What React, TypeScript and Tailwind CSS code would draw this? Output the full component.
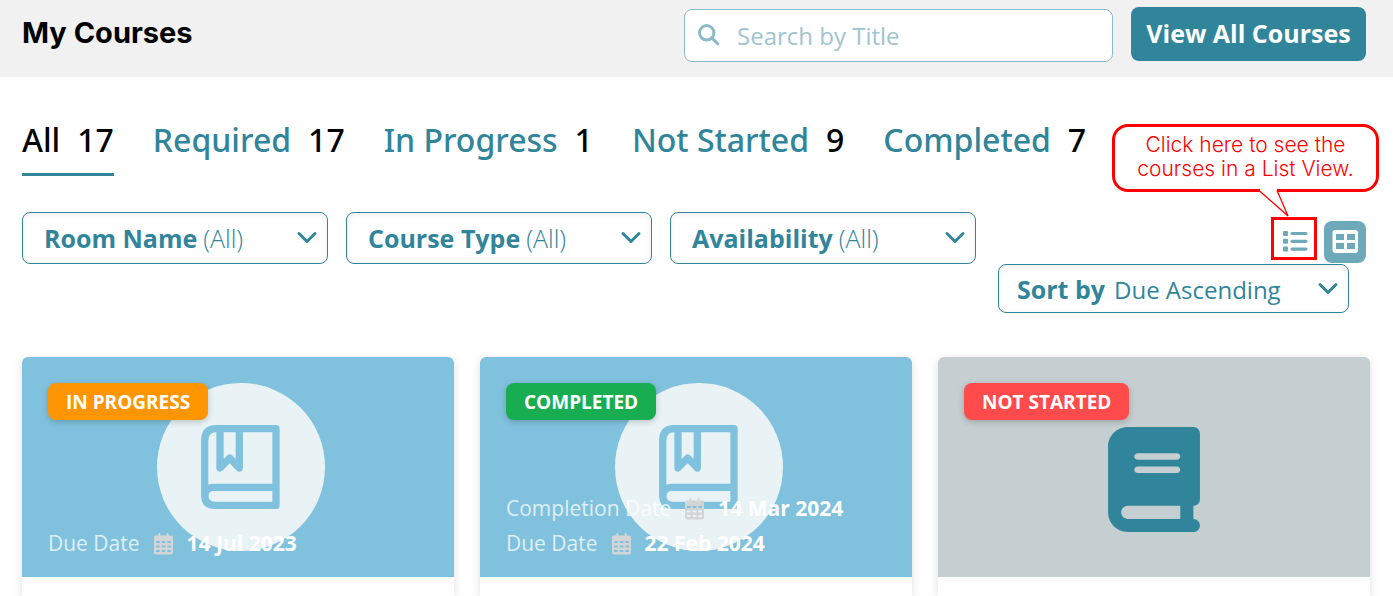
import React, { useState } from "react";
import { FaBook } from "react-icons/fa6";

const tabs = [
    { label: "All", count: 17 },
    { label: "Required", count: 17 },
    { label: "In Progress", count: 1 },
    { label: "Not Started", count: 9 },
    { label: "Completed", count: 7 },
];

const filters = [
    { id: "room", label: "Room Name" },
    { id: "type", label: "Course Type" },
    { id: "availability", label: "Availability" },
];

const courses = [
    { status: "IN PROGRESS", color: "bg-[#ff9500]", started: true, dates: [{ label: "Due Date", value: "14 Jul 2023" }] },
    {
        status: "COMPLETED",
        color: "bg-[#19ad52]",
        started: true,
        dates: [
            { label: "Completion Date", value: "14 Mar 2024" },
            { label: "Due Date", value: "22 Feb 2024" },
        ],
    },
    { status: "NOT STARTED", color: "bg-[#ff4b4b]", started: false, dates: [] },
];

const Chevron = () => (
    <svg className="pointer-events-none absolute right-2 top-1/2 h-6 w-6 -translate-y-1/2" viewBox="0 0 24 24" fill="none" stroke="#31859a" strokeWidth="3" strokeLinecap="round" strokeLinejoin="round">
        <path d="M4 7.5l8 8 8-8" />
    </svg>
);

const SearchIcon = () => (
    <svg className="h-6 w-6 shrink-0" viewBox="0 0 24 24" fill="none" stroke="#8bbac8" strokeWidth="3">
        <circle cx="9.7" cy="8.8" r="7.2" />
        <path d="M15 14.1l5.7 5.7" strokeLinecap="round" />
    </svg>
);

const ListIcon = () => (
    <svg width="26" height="22" viewBox="0 0 26 22" fill="#6da9b8">
        {[0.5, 8.3, 16.1].map((y) => (
            <g key={y}>
                <rect x="1" y={y - 0.5} width="5" height="5" rx="1" />
                <rect x="8.5" y={y + 0.4} width="17" height="3.2" rx="1.6" />
            </g>
        ))}
    </svg>
);

const GridIcon = () => (
    <svg width="26" height="24" viewBox="0 0 26 24">
        <rect x="0.5" y="0" width="25.5" height="23" rx="3" fill="#fff" />
        <g fill="#6da9b8">
            <rect x="4" y="4" width="8" height="6" />
            <rect x="15" y="4" width="8" height="6" />
            <rect x="4" y="13" width="8" height="6" />
            <rect x="15" y="13" width="8" height="6" />
        </g>
    </svg>
);

const CalendarIcon = () => (
    <svg className="shrink-0" width="19" height="22" viewBox="0 0 19 22" fill="#d3d5d6">
        <rect x="4.3" y="0" width="2" height="4" rx="1" />
        <rect x="12.7" y="0" width="2" height="4" rx="1" />
        <path
            fillRule="evenodd"
            d="M2 2.5H17a2 2 0 0 1 2 2V19.500a2 2 0 0 1-2 2H2a2 2 0 0 1-2-2V4.500a2 2 0 0 1 2-2zM2 8v2h3.700v-2zM7.700 8v2h3.600v-2zM13.300 8v2H17v-2zM2 12.500v2h3.700v-2zM7.700 12.500v2h3.600v-2zM13.300 12.500v2H17v-2zM2 17v2h3.700v-2zM7.700 17v2h3.600v-2zM13.300 17v2H17v-2z"
        />
    </svg>
);

const BookmarkBook = () => (
    <svg width="168" height="168" viewBox="0 0 168 168" fill="none" stroke="#80c2dd" strokeWidth="7.3" strokeLinejoin="round">
        <circle cx="84" cy="84" r="84" fill="#e9f3f6" stroke="none" />
        <path d="M119 45.7H59Q47.7 45.7 47.7 58V112Q47.7 122.4 58 122.4H119Z" />
        <path d="M119 104.3H57Q47.7 104.3 47.7 113.5" />
        <path d="M63 46V85L72.7 75L82.3 85V46" />
    </svg>
);

const App = () => {
    const [active, setActive] = useState("All");
    const [search, setSearch] = useState("");

    return (
        <div className="flex min-h-screen flex-col bg-white font-['Open_Sans',sans-serif] text-[#31859a]">
            <header className="flex h-[77px] items-start justify-between bg-[#f1f1f1] pl-[22px] pr-[27px] pt-[7px]">
                <h1 className="font-['Inter',sans-serif] text-[29px] leading-[52px] font-bold text-black">My Courses</h1>
                <div className="flex gap-[18px]">
                    <label className="mt-[2px] flex h-[53px] w-[429px] items-center gap-4 rounded-lg border border-[#8bbac8] bg-white px-3">
                        <SearchIcon />
                        <input
                            type="text"
                            aria-label="Search by Title"
                            placeholder="Search by Title"
                            value={search}
                            onChange={(e) => setSearch(e.target.value)}
                            className="min-w-0 flex-1 text-2xl outline-none placeholder:text-[#9fc4d1]"
                        />
                    </label>
                    <button className="h-[54px] w-[235px] rounded-lg bg-[#31859a] text-[25px] font-bold whitespace-nowrap text-white">View All Courses</button>
                </div>
            </header>

            <nav className="flex gap-[39px] px-[22px] pt-[39px] font-['Noto_Sans',sans-serif]">
                {tabs.map((tab) => (
                    <button
                        key={tab.label}
                        onClick={() => setActive(tab.label)}
                        className={`flex gap-[17px] border-b-3 pb-[9px] text-[32px] leading-[48px] font-medium ${active === tab.label ? "border-[#31859a] text-black" : "border-transparent"}`}
                    >
                        <span>{tab.label}</span>
                        <span className="text-black">{tab.count}</span>
                    </button>
                ))}
            </nav>

            <section className="flex items-start justify-between pl-[22px] pr-[27px] pt-9">
                <div className="flex gap-[18px]">
                    {filters.map((f) => (
                        <div key={f.id} className="relative flex h-[52px] w-[306px] items-center gap-[6px] rounded-lg border border-[#31859a] pt-0.5 pl-[21px] text-[25px] shadow-[inset_0_2px_6px_rgba(0,0,0,0.07)]">
                            <label htmlFor={f.id} className="font-bold whitespace-nowrap">{f.label}</label>
                            <select id={f.id} className="h-full min-w-0 flex-1 appearance-none bg-transparent font-light outline-none">
                                <option>(All)</option>
                            </select>
                            <Chevron />
                        </div>
                    ))}
                </div>
                <div className="-ml-4 flex flex-col items-end pt-[9px]">
                    <div className="relative flex gap-2">
                        <button aria-label="List view" className="flex h-[42px] w-[42px] items-center justify-center">
                            <ListIcon />
                        </button>
                        <button aria-label="Grid view" className="flex h-[42px] w-[42px] items-center justify-center rounded-lg bg-[#6da9b8]">
                            <GridIcon />
                        </button>
                        <div className="absolute -top-1 right-[49px] h-[43px] w-[46px] border-3 border-[#ff0000]"></div>
                        <div className="absolute -top-[97px] -right-[13px] h-[68px] w-[267px] rounded-2xl border-3 border-[#ff0000] bg-white pt-1.5 text-center font-['Inter',sans-serif] text-[21px] leading-6 font-light text-[#ff0000]">
                            Click here to see the
                            <br />
                            courses in a List View.
                        </div>
                        <svg className="absolute -top-8 right-[72px]" width="40" height="30" viewBox="0 0 40 30">
                            <path d="M6 0H23V3H6z" fill="#fff" />
                            <path d="M5 1.500L34 27L23 1.500" fill="#fff" stroke="#ff0000" strokeWidth="1.300" />
                        </svg>
                    </div>
                    <div className="relative mt-px mr-[17px] flex h-[49px] w-[351px] items-center gap-[9px] rounded-lg border border-[#31859a] pt-0.5 pl-[18px] text-[25px] shadow-[inset_0_2px_6px_rgba(0,0,0,0.07)]">
                        <label htmlFor="sort" className="font-bold whitespace-nowrap">Sort by</label>
                        <select id="sort" className="h-full min-w-0 flex-1 appearance-none bg-transparent text-2xl outline-none">
                            <option>Due Ascending</option>
                        </select>
                        <Chevron />
                    </div>
                </div>
            </section>

            <main className="grid flex-1 grid-cols-3 gap-[26px] pt-11 pl-[22px] pr-[23px]">
                {courses.map((course) => (
                    <article key={course.status} className="rounded-t-md bg-white shadow-[0_2px_10px_rgba(0,0,0,0.13)]">
                        <div className={`relative flex h-[220px] justify-center rounded-t-md ${course.started ? "bg-[#80c2dd] pt-[26px] pl-1.5" : "bg-[#c5ced1] pt-[70px]"}`}>
                            {course.started ? <BookmarkBook /> : <FaBook className="h-[105px] w-[92px] text-[#31859a]" />}
                            <span className={`absolute top-[26px] left-[26px] rounded-lg px-[18px] pt-px text-[19px] leading-9 font-bold text-white shadow-[0_2px_6px_rgba(0,0,0,0.2)] ${course.color}`}>{course.status}</span>
                            <div className="absolute bottom-4 left-[26px]">
                                {course.dates.map((d) => (
                                    <p key={d.label} className="flex items-center gap-[14px] text-[21px] leading-[35px]">
                                        <span className="text-white/75">{d.label}</span>
                                        <CalendarIcon />
                                        <span className="font-bold text-white">{d.value}</span>
                                    </p>
                                ))}
                            </div>
                        </div>
                    </article>
                ))}
            </main>
        </div>
    );
};

export default App;
